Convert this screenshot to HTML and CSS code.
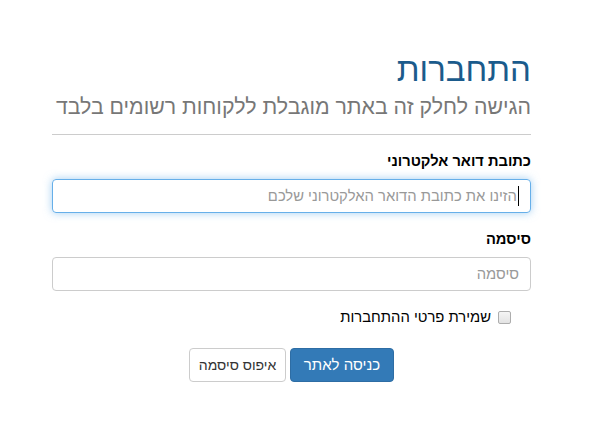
FILE: index.html
```html
<!DOCTYPE html>
<html lang="he" dir="rtl">
<head>
<meta charset="utf-8">
<link rel="stylesheet" href="styles.css">
</head>
<body>
<div class="page">
  <div class="panel">
    <h1 class="title">התחברות</h1>
    <p class="subtitle">הגישה לחלק זה באתר מוגבלת ללקוחות רשומים בלבד</p>
    <hr class="sep">
    <form class="form">
      <div class="group">
        <label class="label" for="email">כתובת דואר אלקטרוני</label>
        <div class="input focused"><span class="caret"></span><span class="ph">הזינו את כתובת הדואר האלקטרוני שלכם</span></div>
      </div>
      <div class="group">
        <label class="label" for="pw">סיסמה</label>
        <div class="input"><span class="ph">סיסמה</span></div>
      </div>
      <div class="check">
        <span class="box"></span>
        <span class="check-text">שמירת פרטי ההתחברות</span>
      </div>
      <div class="actions">
        <button type="button" class="btn primary">כניסה לאתר</button>
        <button type="button" class="btn default">איפוס סיסמה</button>
      </div>
    </form>
  </div>
</div>
</body>
</html>
```
FILE: styles.css
```css
html, body {
  margin: 0;
  padding: 0;
  background: #fff;
}
body {
  font-family: "Liberation Sans", Arial, sans-serif;
  font-size: 14px;
  color: #333;
}
.page {
  width: 603px;
  height: 423px;
  direction: rtl;
}
.panel {
  width: 479px;
  margin-right: 72px;
  padding-top: 52px;
}
.title {
  margin: 0;
  font-family: "Liberation Sans", sans-serif;
  font-weight: 400;
  font-size: 33px;
  line-height: 36px;
  color: #1b5b8c;
}
.subtitle {
  margin: 4px 0 0 0;
  font-family: "Liberation Sans", sans-serif;
  font-size: 21.3px;
  line-height: 30px;
  color: #777;
  white-space: nowrap;
}
.sep {
  margin: 12px 0 0 0;
  border: 0;
  border-top: 1px solid #ccc;
  height: 0;
}
.form {
  margin-top: 16px;
}
.group {
  margin-bottom: 16px;
}
.label {
  display: block;
  font-weight: 700;
  font-size: 14.7px;
  line-height: 20px;
  color: #000;
  margin-bottom: 8px;
}
.input {
  box-sizing: border-box;
  height: 34px;
  border: 1px solid #ccc;
  border-radius: 4px;
  padding: 6px 11px;
  display: flex;
  align-items: center;
  font-size: 14.8px;
  line-height: 20px;
}
.input.focused {
  border-color: #66afe9;
  box-shadow: 0 0 8px rgba(102, 175, 233, 0.6);
}
.ph {
  color: #999;
}
.caret {
  width: 1px;
  height: 20px;
  background: #000;
  margin-left: 1px;
}
.check {
  display: flex;
  align-items: center;
  padding-right: 20px;
  margin-top: 10px;
  height: 20px;
}
.box {
  box-sizing: border-box;
  width: 13px;
  height: 13px;
  border: 1px solid #adadad;
  border-radius: 2px;
  background: linear-gradient(#f5f5f5, #e3e3e3);
  margin-left: 7px;
}
.check-text {
  font-size: 14.8px;
  color: #000;
}
.actions {
  display: flex;
  justify-content: center;
  gap: 4px;
  margin-top: 21px;
}
.btn {
  box-sizing: border-box;
  height: 34px;
  padding: 6px 0;
  font-family: "Liberation Sans", Arial, sans-serif;
  font-size: 14px;
  line-height: 20px;
  border-radius: 4px;
  border: 1px solid transparent;
  white-space: nowrap;
  text-align: center;
  cursor: pointer;
}
.primary {
  background: #337ab7;
  border-color: #2e6da4;
  color: #fff;
  font-size: 15px;
  width: 104px;
}
.default {
  background: #fff;
  border-color: #ccc;
  color: #333;
  width: 97px;
}
```
